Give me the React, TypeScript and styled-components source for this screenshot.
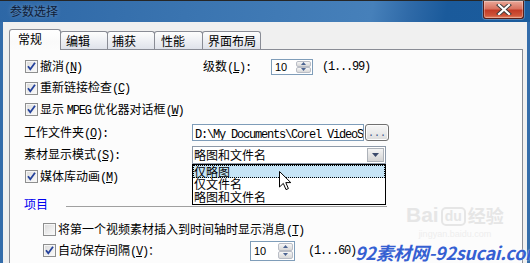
import styled, { createGlobalStyle } from 'styled-components';

const GlobalStyle = createGlobalStyle`
  html, body { margin: 0; padding: 0; }
  body {
    background: #fff;
    font-family: "Noto Sans CJK SC", sans-serif;
    font-size: 12px;
    color: #000;
  }
  #root { width: 530px; height: 263px; overflow: hidden; }
`;

const Window = styled.div`
  position: relative;
  width: 530px;
  height: 263px;
  display: flex;
  flex-direction: column;
  overflow: hidden;
`;

const TitleBar = styled.div`
  flex: none;
  height: 22px;
  box-sizing: border-box;
  border-top: 1px solid #262626;
  display: flex;
  justify-content: space-between;
  padding: 0 6px 0 10px;
  background: linear-gradient(100deg, #2d67a6 0%, #3a74b0 35%, #4680ba 70%, #2f6aa8 77%, #1a5a9b 84%, #1b5c9d 100%);
`;

const Title = styled.span`
  align-self: center;
  margin-top: -1px;
  font-size: 12px;
  line-height: 14px;
  color: #0f1c36;
  text-shadow: 0 0 5px rgba(255, 255, 255, 0.35);
`;

const CloseButton = styled.div`
  width: 41px;
  height: 18px;
  box-sizing: border-box;
  border: 1px solid #5a1f18;
  border-top: none;
  border-radius: 0 0 3px 3px;
  background: linear-gradient(180deg, #eaa898 0%, #d97360 45%, #c23c27 55%, #cf5439 85%, #e48868 100%);
  box-shadow: inset 0 0 0 1px rgba(255, 255, 255, 0.3), 0 0 0 1px rgba(255, 255, 255, 0.25);
  display: flex;
  align-items: center;
  justify-content: center;
`;

const Body = styled.div`
  flex: 1;
  display: flex;
  flex-direction: column;
  background: #f0f0f0;
  border-left: 3px solid #346dab;
  border-right: 3px solid #346dab;
  padding: 7px 4px 0 6px;
  min-height: 0;
`;

const TabRow = styled.div`
  flex: none;
  height: 20px;
  display: flex;
  align-items: flex-end;
`;

const Tab = styled.div<{ $active?: boolean; $w: number; $pad: number }>`
  position: relative;
  z-index: ${p => (p.$active ? 2 : 1)};
  width: ${p => p.$w}px;
  height: ${p => (p.$active ? 21 : 18)}px;
  margin-bottom: ${p => (p.$active ? -1 : 0)}px;
  margin-left: -1px;
  box-sizing: border-box;
  border: 1px solid #898c95;
  border-bottom: none;
  border-radius: 3px 3px 0 0;
  padding-left: ${p => p.$pad}px;
  display: flex;
  align-items: ${p => (p.$active ? 'flex-start' : 'center')};
  padding-top: ${p => (p.$active ? 2 : 0)}px;
  line-height: 14px;
  background: ${p =>
    p.$active
      ? 'linear-gradient(180deg, #ffffff 0%, #fafafa 60%, #fcfcfc 100%)'
      : 'linear-gradient(180deg, #fdfdfd 0%, #eef0f4 50%, #dfe2ea 100%)'};
  &:first-child { margin-left: 0; }
`;

const Panel = styled.div`
  position: relative;
  flex: 1;
  border: 1px solid #898c95;
  border-bottom: none;
  background: #fcfcfc;
  padding: 6px 0 0 14px;
  display: flex;
  flex-direction: column;
`;

const Row = styled.div<{ $h: number; $indent?: number }>`
  flex: none;
  height: ${p => p.$h}px;
  display: flex;
  align-items: center;
  padding-left: ${p => p.$indent ?? 0}px;
`;

const Cell = styled.div<{ $w: number }>`
  flex: none;
  width: ${p => p.$w}px;
  display: flex;
  align-items: center;
  white-space: nowrap;
`;

const Label = styled.span`
  line-height: 14px;
  white-space: nowrap;
`;

const Lat = styled.span`
  font-family: "Liberation Mono", monospace;
  font-size: 12px;
  letter-spacing: -1.2px;
`;

const Box = styled.span`
  flex: none;
  width: 13px;
  height: 13px;
  margin: 0 2px 0 1px;
  box-sizing: border-box;
  border: 1px solid #8e8f8f;
  background: linear-gradient(135deg, #d9d9d9 0%, #ededed 55%, #fbfbfb 100%);
  box-shadow: inset 0 0 0 1px #f6f6f6;
  display: inline-flex;
  align-items: center;
  justify-content: center;
`;

const Spin = styled.div<{ $w: number; $h: number }>`
  flex: none;
  width: ${p => p.$w}px;
  height: ${p => p.$h}px;
  box-sizing: border-box;
  border: 1px solid #7f9db9;
  background: #fff;
  display: flex;
`;

const SpinValue = styled.span`
  flex: 1;
  padding-left: 3px;
  display: flex;
  align-items: center;
  font-family: "Liberation Sans", sans-serif;
  font-size: 11px;
`;

const SpinButtons = styled.div`
  width: 15px;
  margin: 1px;
  display: flex;
  flex-direction: column;
`;

const SpinButton = styled.div`
  flex: 1;
  box-sizing: border-box;
  border: 1px solid #b9bdc6;
  border-radius: 2px;
  background: linear-gradient(180deg, #f7f7f7 0%, #e6e6e6 50%, #d9d9d9 100%);
  display: flex;
  align-items: center;
  justify-content: center;
`;

const PathInput = styled.div`
  flex: none;
  width: 172px;
  height: 17px;
  box-sizing: border-box;
  border: 1px solid #7f9db9;
  background: #fff;
  padding-left: 2px;
  overflow: hidden;
  white-space: nowrap;
  line-height: 15px;
`;

const BrowseButton = styled.div`
  flex: none;
  width: 24px;
  height: 17px;
  margin-left: 1px;
  box-sizing: border-box;
  border: 1px solid #707070;
  border-radius: 3px;
  background: linear-gradient(180deg, #f6f6f6 0%, #ebebeb 50%, #dbdbdb 100%);
  box-shadow: inset 0 0 0 1px #fcfcfc;
  display: flex;
  align-items: flex-end;
  justify-content: center;
  padding-bottom: 2px;
  color: #3a5289;
  font-family: "Liberation Mono", monospace;
  font-size: 10px;
  line-height: 8px;
`;

const Combo = styled.div`
  position: relative;
  flex: none;
  width: 194px;
  height: 18px;
  box-sizing: border-box;
  border: 1px solid #8d99a8;
  background: #fff;
  display: flex;
`;

const ComboText = styled.span`
  flex: 1;
  padding-left: 1px;
  line-height: 16px;
`;

const ComboButton = styled.div`
  width: 17px;
  margin: 1px;
  box-sizing: border-box;
  border: 1px solid #adb2b9;
  background: linear-gradient(180deg, #f4f4f4 0%, #e4e4e4 50%, #d4d4d4 100%);
  display: flex;
  align-items: center;
  justify-content: center;
`;

const DropList = styled.div`
  position: absolute;
  z-index: 5;
  left: -1px;
  top: 17px;
  width: 194px;
  box-sizing: border-box;
  border: 1px solid #000;
  background: #fff;
  display: flex;
  flex-direction: column;
`;

const DropItem = styled.div<{ $selected?: boolean }>`
  height: 13px;
  box-sizing: border-box;
  font-size: 12px;
  line-height: 12px;
  padding-left: ${p => (p.$selected ? 0 : 1)}px;
  background: ${p => (p.$selected ? '#c6e4f6' : 'transparent')};
  border: ${p => (p.$selected ? '1px dotted #000' : 'none')};
  white-space: nowrap;
`;

const GroupTitle = styled.span`
  color: #0000f0;
  line-height: 14px;
`;

const GroupLine = styled.div`
  width: 321px;
  height: 1px;
  margin-left: 18px;
  margin-top: 4px;
  background: #a0a0a0;
`;

const Hint = styled.span<{ $gap: number }>`
  margin-left: ${p => p.$gap}px;
  font-family: "Liberation Mono", monospace;
  letter-spacing: -1.2px;
  white-space: nowrap;
`;

const Cursor = styled.svg`
  position: absolute;
  left: 279px;
  top: 171px;
  z-index: 10;
`;

const Watermark = styled.div`
  position: absolute;
  left: 355px;
  bottom: 0px;
  z-index: 10;
  font-family: "Noto Sans CJK SC", sans-serif;
  font-size: 18px;
  font-weight: 700;
  font-style: italic;
  line-height: 22px;
  letter-spacing: -0.3px;
  color: #3560d2;
  text-shadow: 0 0 2px rgba(255, 255, 255, 0.9);
  white-space: nowrap;
`;

const BaiduMark = styled.div`
  position: absolute;
  left: 406px;
  top: 204px;
  z-index: 4;
  color: #e6e6e6;
  display: flex;
  flex-direction: column;
  align-items: center;
  pointer-events: none;
`;

const BaiduLine = styled.div`
  display: flex;
  align-items: flex-end;
  font-family: "Liberation Sans", sans-serif;
  font-size: 21px;
  font-weight: 700;
  line-height: 22px;
`;

const BaiduDu = styled.span`
  margin: 0 2px;
  padding: 0 2px;
  border: 2px solid #e6e6e6;
  border-radius: 5px;
  font-size: 14px;
  line-height: 15px;
`;

const BaiduCn = styled.span`
  font-family: "Noto Sans CJK SC", sans-serif;
  font-size: 18px;
  font-weight: 700;
`;

const BaiduUrl = styled.div`
  margin-top: 3px;
  font-family: "Liberation Sans", sans-serif;
  font-size: 9px;
  line-height: 10px;
  color: #eeeeee;
`;

function Check({ checked }: { checked?: boolean }) {
  return (
    <Box>
      {checked && (
        <svg width="11" height="11" viewBox="0 0 11 11">
          <path d="M2 5.2 L4.3 8.2 L9 1.8" fill="none" stroke="#23419b" strokeWidth="1.8" />
        </svg>
      )}
    </Box>
  );
}

function Spinner({ value, w, h }: { value: string; w: number; h: number }) {
  return (
    <Spin $w={w} $h={h}>
      <SpinValue>{value}</SpinValue>
      <SpinButtons>
        <SpinButton>
          <svg width="5" height="3" viewBox="0 0 5 3"><path d="M0 3 L2.5 0 L5 3 Z" fill="#4b6391" /></svg>
        </SpinButton>
        <SpinButton>
          <svg width="5" height="3" viewBox="0 0 5 3"><path d="M0 0 L2.5 3 L5 0 Z" fill="#4b6391" /></svg>
        </SpinButton>
      </SpinButtons>
    </Spin>
  );
}

function Acc({ k, colon }: { k: string; colon?: boolean }) {
  return (
    <Lat>
      (<u>{k}</u>){colon ? ':' : ''}
    </Lat>
  );
}

export default function App() {
  return (
    <>
      <GlobalStyle />
      <Window>
        <TitleBar>
          <Title>参数选择</Title>
          <CloseButton>
            <svg width="16" height="11" viewBox="0 0 16 11">
              <path d="M3 1 L13 10 M13 1 L3 10" stroke="#3a3a3a" strokeWidth="4" strokeLinecap="square" />
              <path d="M3 1 L13 10 M13 1 L3 10" stroke="#ffffff" strokeWidth="2.2" strokeLinecap="square" />
            </svg>
          </CloseButton>
        </TitleBar>
        <Body>
          <TabRow>
            <Tab $active $w={52} $pad={8}>常规</Tab>
            <Tab $w={48} $pad={5}>编辑</Tab>
            <Tab $w={48} $pad={4}>捕获</Tab>
            <Tab $w={49} $pad={6}>性能</Tab>
            <Tab $w={59} $pad={5}>界面布局</Tab>
          </TabRow>
          <Panel>
            <Row $h={21}>
              <Cell $w={179}>
                <Check checked />
                <Label>撤消<Acc k="N" /></Label>
              </Cell>
              <Cell $w={68}>
                <Label>级数<Acc k="L" colon /></Label>
              </Cell>
              <Spinner value="10" w={42} h={16} />
              <Hint $gap={9}>(1...99)</Hint>
            </Row>
            <Row $h={22}>
              <Check checked />
              <Label>重新链接检查<Acc k="C" /></Label>
            </Row>
            <Row $h={21}>
              <Check checked />
              <Label>显示 <Lat>MPEG</Lat> 优化器对话框<Acc k="W" /></Label>
            </Row>
            <Row $h={25}>
              <Cell $w={168}>
                <Label>工作文件夹<Acc k="O" colon /></Label>
              </Cell>
              <PathInput>
                <Lat>D:\My Documents\Corel VideoS</Lat>
              </PathInput>
              <BrowseButton>...</BrowseButton>
            </Row>
            <Row $h={20}>
              <Cell $w={168}>
                <Label>素材显示模式<Acc k="S" colon /></Label>
              </Cell>
              <Combo>
                <ComboText>略图和文件名</ComboText>
                <ComboButton>
                  <svg width="7" height="4" viewBox="0 0 7 4"><path d="M0 0 L7 0 L3.5 4 Z" fill="#3b4a6b" /></svg>
                </ComboButton>
                <DropList>
                  <DropItem $selected>仅略图</DropItem>
                  <DropItem>仅文件名</DropItem>
                  <DropItem>略图和文件名</DropItem>
                </DropList>
              </Combo>
            </Row>
            <Row $h={23}>
              <Check checked />
              <Label>媒体库动画<Acc k="M" /></Label>
            </Row>
            <Row $h={32}>
              <GroupTitle>项目</GroupTitle>
              <GroupLine />
            </Row>
            <Row $h={19} $indent={18}>
              <Check />
              <Label>将第一个视频素材插入到时间轴时显示消息<Acc k="T" /></Label>
            </Row>
            <Row $h={23} $indent={18}>
              <Cell $w={208}>
                <Check checked />
                <Label>自动保存间隔<Acc k="V" />：</Label>
              </Cell>
              <Spinner value="10" w={45} h={20} />
              <Hint $gap={13}>(1...60)</Hint>
            </Row>
          </Panel>
        </Body>
        <BaiduMark>
          <BaiduLine>
            Bai
            <BaiduDu>du</BaiduDu>
            <BaiduCn>经验</BaiduCn>
          </BaiduLine>
          <BaiduUrl>jingyan.baidu.com</BaiduUrl>
        </BaiduMark>
        <Cursor width="13" height="20" viewBox="0 0 13 20">
          <path d="M0.5 0.5 L0.5 16 L4.3 12.4 L7 18.6 L9.4 17.6 L6.8 11.6 L11.8 11.6 Z" fill="#fff" stroke="#000" strokeWidth="1" strokeLinejoin="miter" />
        </Cursor>
        <Watermark>92素材网-92sucai.com</Watermark>
      </Window>
    </>
  );
}
